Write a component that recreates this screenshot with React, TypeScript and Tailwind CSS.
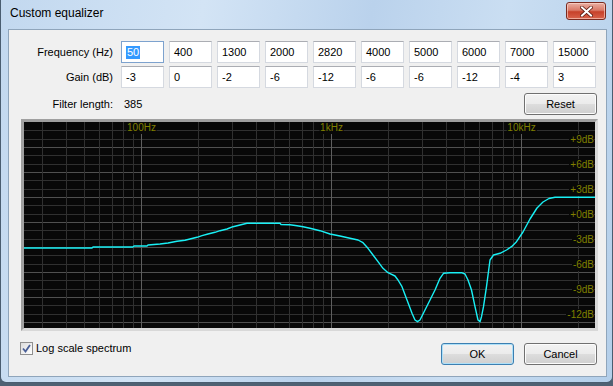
import React from 'react';

const FREQS = ['50', '400', '1300', '2000', '2820', '4000', '5000', '6000', '7000', '15000'];
const GAINS = ['-3', '0', '-2', '-6', '-12', '-6', '-6', '-12', '-4', '3'];
const DB_LABELS = ['+9dB', '+6dB', '+3dB', '+0dB', '-3dB', '-6dB', '-9dB', '-12dB'];

// graph inner area is 571 x 206, origin at screen (24,122)
const GW = 571;
const GH = 206;
const fx = (f: number) => 117.7 + 190 * Math.log10(f / 100);

const vLines: { x: number; major: boolean }[] = [];
for (const dec of [10, 100, 1000, 10000]) {
  for (let m = 1; m <= 9; m++) {
    const x = fx(dec * m);
    if (x > 1 && x < GW - 1) vLines.push({ x: Math.floor(x) + 0.5, major: m === 1 });
  }
}

const hLines: { y: number; major: boolean }[] = [];
for (let k = 1; k <= 24; k++) {
  hLines.push({ y: Math.round((k * 25) / 3) + 0.5, major: k % 3 === 0 });
}

// curve points in screen coords
const CURVE: [number, number][] = [
  [24, 248], [92, 248], [93, 247], [133, 247], [134, 246], [147, 246], [148, 245], [160, 244],
  [168, 243], [177, 241.3], [185, 240.3], [190, 239], [197, 237.3], [202, 235.7], [208, 234],
  [215, 232.3], [220, 230.7], [227, 229], [233, 226.7], [240, 225], [247, 223.3], [280, 223.3],
  [281, 224.5], [290, 224.7], [297, 225.7], [303, 226.7], [310, 228.3], [320, 230.7], [330, 234],
  [340, 236], [350, 238.3], [358, 240], [363, 242.7], [368, 248.3], [373, 255], [378, 261.7],
  [383, 268.3], [388, 272.7], [395, 276], [398, 280], [402, 286.7], [407, 300], [412, 313.3],
  [415, 320], [417.5, 321.7], [420, 320], [425, 310], [430, 300], [435, 290], [440, 278.3],
  [443.5, 273.3], [450, 272.7], [461.5, 272.7], [465, 274], [468, 280], [471.5, 290], [475, 306.7],
  [478, 320], [480, 321.7], [481.5, 316.7], [483.5, 306.7], [486.5, 286.7], [490, 260],
  [493.5, 255], [500, 253.3], [506.5, 250], [511.5, 246.7], [516.5, 241.7], [523, 232], [530, 219],
  [537, 208], [543, 202], [549, 198.5], [555, 197.3], [595, 197.3],
];
const curvePoints = CURVE.map(([x, y]) => `${x - 24},${y - 122}`).join(' ');

function VistaButton({ label, isDefault }: { label: string; isDefault?: boolean }) {
  return (
    <div
      className={
        'w-[73px] h-[22px] rounded-[3px] border flex items-center justify-center text-[11px] text-black ' +
        (isDefault
          ? 'border-[#3c7fb1] shadow-[inset_0_0_0_1px_#aee0f8] bg-[linear-gradient(#f2f2f2_0%,#ebebeb_50%,#dddddd_51%,#cfcfcf_100%)]'
          : 'border-[#707070] shadow-[inset_0_0_0_1px_#fcfcfc] bg-[linear-gradient(#f2f2f2_0%,#ebebeb_50%,#dddddd_51%,#cfcfcf_100%)]')
      }
    >
      {label}
    </div>
  );
}

function Field({ value, selected }: { value: string; selected?: boolean }) {
  return (
    <div
      className={
        'w-[43px] h-[22px] bg-white border flex items-center pl-[4px] text-[11px] text-black ' +
        (selected ? 'border-[#7da2ce]' : 'border-[#d5d9e0] border-t-[#abadb3]')
      }
    >
      {selected ? <span className="bg-[#3399ff] text-white leading-[13px] px-[1px]">{value}</span> : value}
    </div>
  );
}

function Graph() {
  return (
    <div className="ml-[12px] mt-[4px] w-[577px] h-[212px] border-[3px] border-t-[#a0a0a0] border-l-[#a0a0a0] border-b-[#d8d8d8] border-r-[#d8d8d8]">
      <div className="relative w-[571px] h-[206px] bg-[#080808] overflow-hidden">
        <svg width={GW} height={GH} className="absolute inset-0" shapeRendering="crispEdges">
          {hLines.map((l, i) => (
            <line key={'h' + i} x1={0} x2={GW} y1={l.y} y2={l.y} stroke={l.major ? '#505050' : '#303030'} strokeWidth={1} />
          ))}
          {vLines.map((l, i) => (
            <line key={'v' + i} x1={l.x} x2={l.x} y1={0} y2={GH} stroke={l.major ? '#5e5e5e' : '#303030'} strokeWidth={1} />
          ))}
        </svg>
        {[
          { t: '100Hz', x: 117.5 },
          { t: '1kHz', x: 307.5 },
          { t: '10kHz', x: 497.5 },
        ].map((l) => (
          <div
            key={l.t}
            className="absolute top-0 -translate-x-1/2 bg-[#080808] px-[1px] h-[12px] leading-[12px] text-[10px] text-[#808000]"
            style={{ left: l.x }}
          >
            {l.t}
          </div>
        ))}
        {DB_LABELS.map((t, j) => (
          <div
            key={t}
            className="absolute right-[1px] bg-[#080808] pl-[1px] h-[12px] leading-[12px] text-[10px] text-[#808000]"
            style={{ top: 25 + 25 * j - 13 }}
          >
            {t}
          </div>
        ))}
        <svg width={GW} height={GH} className="absolute inset-0">
          <polyline points={curvePoints} fill="none" stroke="#19f0f5" strokeWidth={1.4} strokeLinejoin="round" />
        </svg>
      </div>
    </div>
  );
}

export default function App() {
  return (
    <div className="w-[613px] h-[386px] bg-[#4f6173] overflow-hidden font-['Liberation_Sans',Arial,sans-serif]">
      <div className="h-[383px] rounded-b-[6px] border border-t-0 border-[#4a5d70] bg-[linear-gradient(100deg,#c2d8ef_0%,#d3e4f5_30%,#bad2ec_55%,#cadef2_75%,#b4cfea_100%)] flex flex-col pl-[7px] pr-[5px] pb-[5px]">
        {/* title bar */}
        <div className="h-[29px] flex items-start justify-between">
          <div className="pl-[2px] pt-[6px] text-[12px] leading-[14px] text-black">Custom equalizer</div>
          <div className="mt-[2px] mr-[1px] w-[40px] h-[18px] rounded-[3px] border border-[#7a2a1f] shadow-[inset_0_0_0_1px_rgba(255,220,210,0.6)] bg-[linear-gradient(#eab0a4_0%,#da7a68_45%,#c7412a_55%,#d9634c_100%)] flex items-center justify-center">
            <svg width="13" height="11" viewBox="0 0 13 11">
              <path d="M2 1.5 L11 9.5 M11 1.5 L2 9.5" stroke="#5a1a10" strokeWidth="3.6" strokeLinecap="square" />
              <path d="M2 1.5 L11 9.5 M11 1.5 L2 9.5" stroke="#ffffff" strokeWidth="2" strokeLinecap="square" />
            </svg>
          </div>
        </div>

        {/* client area */}
        <div className="flex-1 border border-[#8fa5bb] bg-[#f0f0f0] flex flex-col pt-[11px] text-[11px] text-black">
          <div className="flex items-center">
            <div className="w-[104px] text-right">Frequency (Hz)</div>
            <div className="ml-[8px] flex gap-[5px]">
              {FREQS.map((f, i) => (
                <Field key={f} value={f} selected={i === 0} />
              ))}
            </div>
          </div>
          <div className="flex items-center mt-[3px]">
            <div className="w-[104px] text-right">Gain (dB)</div>
            <div className="ml-[8px] flex gap-[5px]">
              {GAINS.map((g, i) => (
                <Field key={i} value={g} />
              ))}
            </div>
          </div>
          <div className="flex items-center mt-[5px] h-[22px]">
            <div className="w-[104px] text-right">Filter length:</div>
            <div className="ml-[11px]">385</div>
            <div className="ml-auto mr-[9px]">
              <VistaButton label="Reset" />
            </div>
          </div>

          <Graph />

          <div className="flex items-start mt-[10px]">
            <div className="ml-[11px] flex items-center gap-[3px]">
              <div className="w-[13px] h-[13px] border border-[#8f8f8f] bg-[linear-gradient(135deg,#dcdcdc,#ffffff)] flex items-center justify-center">
                <svg width="9" height="9" viewBox="0 0 9 9">
                  <path d="M1 4.5 L3.5 7.5 L8 1" fill="none" stroke="#4a5f97" strokeWidth="1.8" />
                </svg>
              </div>
              <div className="leading-[14px]">Log scale spectrum</div>
            </div>
            <div className="ml-auto mt-[2px] mr-[9px] flex gap-[10px]">
              <VistaButton label="OK" isDefault />
              <VistaButton label="Cancel" />
            </div>
          </div>
        </div>
      </div>
    </div>
  );
}
